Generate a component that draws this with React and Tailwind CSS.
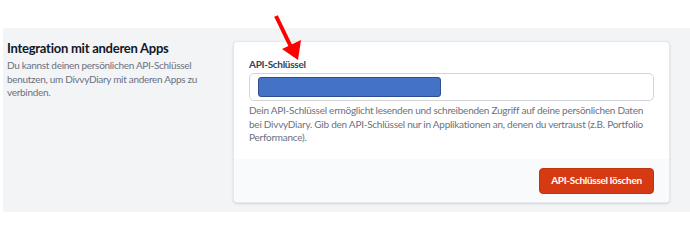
import React from 'react';

const RedArrow = () => (
  <svg className="absolute left-0 top-0 pointer-events-none" width="690" height="244">
    <line x1="276" y1="16" x2="291" y2="47" stroke="#f00" strokeWidth="4" strokeLinecap="butt" />
    <polygon points="282,49 301,40 298,60" fill="#f00" />
  </svg>
);

const App = () => {
  return (
    <div
      className="relative w-[690px] h-[244px] bg-white pt-[28px] pl-[3px] overflow-hidden"
      style={{ fontFamily: 'Lato, "Noto Sans", sans-serif' }}
    >
      <div className="flex h-[184px] bg-[#f3f4f6] pt-[13px]">
        <div className="w-[230px] pl-[4px]">
          <h2 className="text-[13px] leading-[14px] font-bold tracking-[-0.25px] text-[#111827]">
            Integration mit anderen Apps
          </h2>
          <p className="mt-[4px] w-[200px] text-[10px] leading-[13.5px] tracking-[-0.3px] text-[#6b7280]">
            Du kannst deinen persönlichen API-Schlüssel benutzen, um DivvyDiary mit anderen Apps zu
            verbinden.
          </p>
        </div>

        <div className="w-[437px] h-[162px] bg-white rounded-[4px] border border-[#e5e7eb] shadow-sm overflow-hidden flex flex-col">
          <div className="px-[15px] pt-[15px] flex-1">
            <label className="block text-[10px] leading-[14px] font-bold tracking-[-0.3px] text-[#374151]">
              API-Schlüssel
            </label>
            <div className="mt-[2px] h-[28px] w-[405px] rounded-[5px] border border-[#d1d5db] bg-white flex items-center pl-[8px]">
              <div className="h-[20px] w-[183px] rounded-[3px] bg-[#4472c4] border border-[#2e4f8f]" />
            </div>
            <p className="mt-[3px] w-[398px] text-[10px] leading-[13.5px] tracking-[-0.25px] text-[#6b7280]">
              Dein API-Schlüssel ermöglicht lesenden und schreibenden Zugriff auf deine persönlichen Daten
              bei DivvyDiary. Gib den API-Schlüssel nur in Applikationen an, denen du vertraust (z.B. Portfolio
              Performance).
            </p>
          </div>
          <div className="h-[43px] bg-[#f9fafb] flex items-center justify-end px-[15px]">
            <button className="h-[26px] w-[115px] whitespace-nowrap rounded-[4px] bg-[#d63a12] border border-[#c2330f] text-white text-[10px] font-bold tracking-[-0.3px]">
              API-Schlüssel löschen
            </button>
          </div>
        </div>
      </div>
      <RedArrow />
    </div>
  );
};

export default App;
